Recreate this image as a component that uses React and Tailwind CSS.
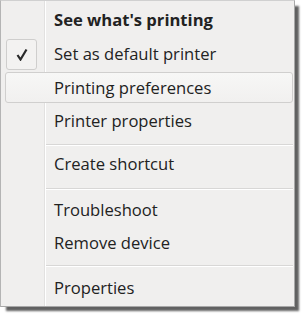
import React from 'react';

const items = [
    { label: "See what's printing", bold: true, h: 'h-[34px]', pt: 'mt-[2px]' },
    { label: 'Set as default printer', checked: true, h: 'h-[34px]' },
    { label: 'Printing preferences', hover: true, h: 'h-[34px]' },
    { label: 'Printer properties', h: 'h-[33px]' },
    { sep: 'mt-[6px] mb-[2px]' },
    { label: 'Create shortcut', h: 'h-[33px]' },
    { sep: 'mt-[7px] mb-[4px]' },
    { label: 'Troubleshoot', h: 'h-[33px]' },
    { label: 'Remove device', h: 'h-[33px]' },
    { sep: 'mt-[5px] mb-[5px]' },
    { label: 'Properties', h: 'h-[33px]' },
];

const Check = () => (
    <svg width="12" height="13" viewBox="0 0 12 13" className="text-[#2a2a2a]">
        <path d="M1.5 7 L4.5 11.5 L10.5 1.5" fill="none" stroke="currentColor" strokeWidth="2.2" strokeLinejoin="miter" />
    </svg>
);

const App = () => {
    return (
        <div className="w-[306px] h-[321px] bg-white overflow-hidden font-['Open_Sans',sans-serif]">
            <div className="relative w-[295px] h-[307px] bg-[#f0efee] border border-l-[#b4b4b4] border-r-[#a8a8a8] border-b-[#a8a8a8] border-t-[#d0d0d0] shadow-[5px_5px_2px_-1px_rgba(0,0,0,0.62)]">
                {/* gutter line */}
                <div className="absolute top-0 bottom-0 left-[43px] flex">
                    <div className="w-px h-full bg-[#e2e1e0]" />
                    <div className="w-px h-full bg-white" />
                </div>

                <div className="relative flex flex-col">
                    {items.map((it, i) => it.sep ? (
                        <div key={i} className={`ml-[45px] mr-[1px] ${it.sep}`}>
                            <div className="h-px bg-[#d8d7d6]" />
                            <div className="h-px bg-white" />
                        </div>
                    ) : (
                        <div key={i} className={`relative flex items-center ${it.h} ${it.pt || ''}`}>
                            {it.hover && (
                                <div className="absolute left-[4px] right-[1px] top-[1px] bottom-[2px] rounded-[3px] border border-[#d0cfce] bg-gradient-to-b from-[#f7f7f6] to-[#f1f0ef]" />
                            )}
                            {it.checked && (
                                <div className="absolute left-[5px] top-[2px] w-[31px] h-[31px] rounded-[3px] border border-[#cfcecd] bg-[#f3f2f1] flex items-center justify-center">
                                    <Check />
                                </div>
                            )}
                            <span className={`relative pl-[53px] text-[16.6px] leading-none text-[#222] ${it.bold ? 'font-bold' : ''}`}>
                                {it.label}
                            </span>
                        </div>
                    ))}
                </div>
            </div>
        </div>
    );
};

export default App;
